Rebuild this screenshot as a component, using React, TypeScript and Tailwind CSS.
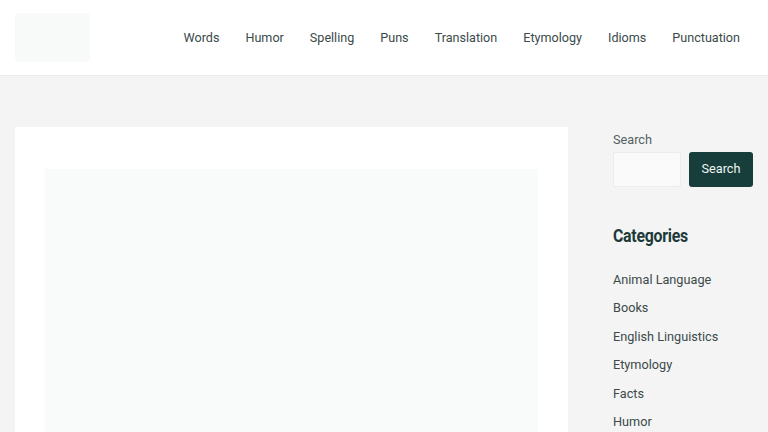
import React from 'react';

const NAV = ['Words', 'Humor', 'Spelling', 'Puns', 'Translation', 'Etymology', 'Idioms', 'Punctuation'];
const CATEGORIES = ['Animal Language', 'Books', 'English Linguistics', 'Etymology', 'Facts', 'Humor'];

export default function App() {
  return (
    <div className="min-h-screen bg-[#f4f4f4] overflow-hidden" style={{ fontFamily: 'Roboto, "Noto Sans", sans-serif' }}>
      {/* Header */}
      <header className="h-[76px] bg-white border-b border-[#eaeaea] flex items-center justify-between pl-[15px] pr-[28px]">
        <div className="w-[75px] h-[49px] bg-[#f8faf9] rounded-sm" />
        <nav className="flex items-center gap-[26px] text-[12.6px] text-[#3b4a4a] pt-[1px]">
          {NAV.map((n) => (
            <a key={n} className="leading-none">{n}</a>
          ))}
        </nav>
      </header>

      {/* Content */}
      <div className="flex pl-[15px] pt-[51px] gap-[45px]">
        <main className="w-[553px] shrink-0 bg-white pt-[42px] px-[30px]">
          <div className="h-[300px] bg-[#f9fafa]" />
        </main>

        <aside className="w-[140px] shrink-0 text-[12.7px] text-[#3b4a4a]">
          <label className="block text-[#555f5f] leading-none mt-[7px]">Search</label>
          <div className="flex gap-[8px] mt-[5px]">
            <div className="w-[68px] h-[35px] bg-[#fafafa] border border-[#ececec] rounded-[2px]" />
            <button className="w-[64px] h-[35px] bg-[#173e3a] text-[#f0f4f3] rounded-[3px] leading-none">Search</button>
          </div>

          <h2 className="mt-[40px] text-[18px] font-bold text-[#1d3a3a] leading-none tracking-[-0.3px] scale-x-[0.88] origin-left">
            Categories
          </h2>

          <ul className="mt-[27px] flex flex-col gap-[13.5px]">
            {CATEGORIES.map((c) => (
              <li key={c} className="leading-[15px]">{c}</li>
            ))}
          </ul>
        </aside>
      </div>
    </div>
  );
}
